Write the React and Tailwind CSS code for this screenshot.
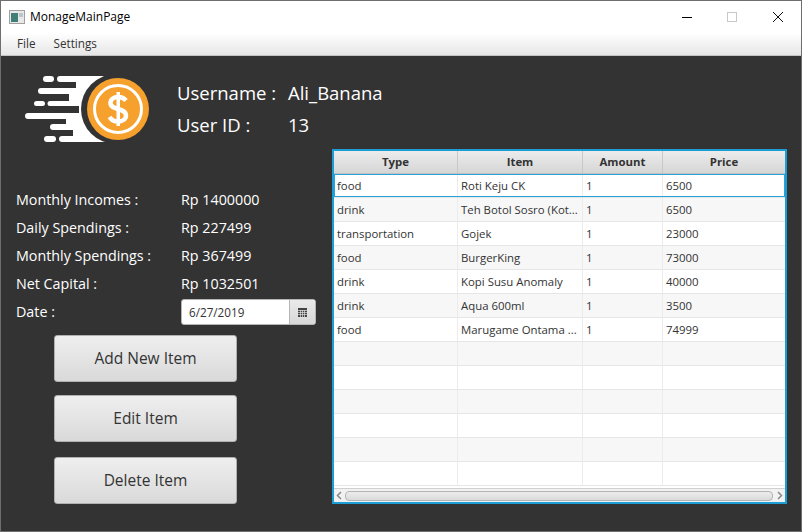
const rows = [
  ['food', 'Roti Keju CK', '1', '6500'],
  ['drink', 'Teh Botol Sosro (Kot...', '1', '6500'],
  ['transportation', 'Gojek', '1', '23000'],
  ['food', 'BurgerKing', '1', '73000'],
  ['drink', 'Kopi Susu Anomaly', '1', '40000'],
  ['drink', 'Aqua 600ml', '1', '3500'],
  ['food', 'Marugame Ontama ...', '1', '74999'],
  ['', '', '', ''],
  ['', '', '', ''],
  ['', '', '', ''],
  ['', '', '', ''],
  ['', '', '', ''],
  ['', '', '', ''],
]

const stats = [
  ['Monthly Incomes :', 'Rp 1400000'],
  ['Daily Spendings :', 'Rp 227499'],
  ['Monthly Spendings :', 'Rp 367499'],
  ['Net Capital :', 'Rp 1032501'],
]

const columns = ['w-[124px]', 'w-[125px]', 'w-[80px]', 'flex-1']
const headers = ['Type', 'Item', 'Amount', 'Price']

function Logo() {
  return (
    <svg width="126" height="68" viewBox="0 0 126 68" className="block shrink-0">
      <g fill="#fff">
        <rect x="18" y="0" width="11" height="6" rx="3" />
        <path d="M35 0H85V66H37a3 3 0 0 1 0-6H48V54H28a3 3 0 0 1 0-6H41V43H3a3 3 0 0 1 0-6H54V30H25a2.5 2.5 0 0 1 0-5H44V18H16a3 3 0 0 1 0-6H51V6H35a3 3 0 0 1 0-6Z" />
        <rect x="9" y="25" width="11" height="5" rx="2.5" />
        <rect x="19" y="60" width="12" height="6" rx="3" />
      </g>
      <circle cx="91" cy="33" r="35" fill="#333333" />
      <circle cx="93" cy="33" r="31" fill="#f6a02d" />
      <circle cx="93" cy="33" r="23.5" fill="none" stroke="#fff" strokeWidth="3" />
      <path d="M101 24.5c-2-2.5-5-3.5-8-3.5-4 0-7.500 2-7.500 6 0 8 15.500 4 15.500 12.500 0 4-4 6-8 6-3.500 0-6.500-1.500-8.500-4.500" fill="none" stroke="#fff" strokeWidth="4.5" />
      <rect x="91.500" y="16" width="3.500" height="34" fill="#fff" />
    </svg>
  )
}

function GrayButton({ label, className }) {
  return (
    <button className={`h-[47px] w-[183px] rounded-[3px] border border-[#b0b0b0] bg-gradient-to-b from-[#efefef] to-[#d9d9d9] text-[15.5px] text-[#333] ${className}`}>
      {label}
    </button>
  )
}

export default function App() {
  return (
    <div className="flex h-[532px] w-[802px] flex-col overflow-hidden border border-[#6e6e6e] bg-[#333333] font-['Open_Sans','Noto_Sans',sans-serif]">
      {/* title bar */}
      <div className="flex h-[32px] shrink-0 items-center bg-white pl-2">
        <svg width="16" height="14" viewBox="0 0 16 14">
          <rect x="0.5" y="0.5" width="15" height="13" fill="#e8e8e8" stroke="#a0a0a0" />
          <rect x="2" y="3" width="7" height="9" fill="#3f7f78" />
          <rect x="10" y="3" width="4" height="4" fill="#b9c4cc" />
        </svg>
        <span className="ml-[5px] text-[12px] text-black">MonageMainPage</span>
        <div className="ml-auto flex items-center">
          <div className="h-px w-[10px] bg-black" />
          <div className="ml-[35px] h-[10px] w-[10px] border border-[#c8c8c8]" />
          <svg width="12" height="12" viewBox="0 0 12 12" className="ml-[35px] mr-[17px]">
            <path d="M1 1L11 11M11 1L1 11" stroke="#111" strokeWidth="1" fill="none" />
          </svg>
        </div>
      </div>
      {/* menu */}
      <div className="flex h-[23px] shrink-0 items-center gap-[18px] border-b border-[#c4c4c4] bg-gradient-to-b from-white to-[#e6e6e6] pl-4 text-[11.7px] text-[#333]">
        <span>File</span>
        <span>Settings</span>
      </div>

      <div className="flex min-h-0 flex-1 pb-[27px]">
        {/* left side */}
        <div className="flex w-[331px] shrink-0 flex-col">
          <div className="flex pl-[24px] pt-5">
            <Logo />
            <div className="ml-[26px] mt-px h-[67px] text-[18.5px] leading-[32px] text-white">
              <div className="flex"><span className="w-[111px]">Username :</span><span>Ali_Banana</span></div>
              <div className="flex"><span className="w-[111px]">User ID :</span><span>13</span></div>
            </div>
          </div>
          <div className="mt-[42px] flex flex-col pl-[15px] text-[14.3px] leading-[28px] text-white">
            {stats.map(([k, v]) => (
              <div key={k} className="flex"><span className="w-[165px]">{k}</span><span>{v}</span></div>
            ))}
            <div className="flex items-center">
              <span className="w-[165px]">Date :</span>
              <div className="flex h-[26px] w-[135px] overflow-hidden rounded-[3px] border border-[#b5b5b5] bg-white">
                <span className="flex-1 pl-[7px] text-[11.7px] leading-[24px] text-[#333]">6/27/2019</span>
                <div className="flex w-[26px] items-center justify-center border-l border-[#b5b5b5] bg-gradient-to-b from-[#eaeaea] to-[#d8d8d8]">
                  <svg width="9" height="9" viewBox="0 0 9 9">
                    <rect width="9" height="9" fill="#444" />
                    <path d="M0 2.500H9M0 4.500H9M0 6.500H9M2.500 2V9M4.500 2V9M6.500 2V9" stroke="#e0e0e0" strokeWidth="0.7" />
                  </svg>
                </div>
              </div>
            </div>
          </div>
          <div className="mt-[9px] flex flex-col pl-[53px]">
            <GrayButton label="Add New Item" />
            <GrayButton label="Edit Item" className="mt-[13px]" />
            <GrayButton label="Delete Item" className="mt-[15px]" />
          </div>
        </div>

        {/* table */}
        <div className="mr-[14px] mt-[93px] flex min-w-0 flex-1 flex-col border-2 border-[#1c9dd4] bg-white text-[11.4px] text-[#333]">
          <div className="flex h-[23px] shrink-0 border-b border-[#c0c0c0] bg-gradient-to-b from-[#ececec] to-[#d6d6d6] font-bold">
            {headers.map((h, i) => (
              <div key={h} className={`${columns[i]} flex items-center justify-center border-r border-[#c8c8c8] last:border-r-0`}>{h}</div>
            ))}
          </div>
          <div className="min-h-0 flex-1 overflow-hidden">
            {rows.map((row, r) => (
              <div
                key={r}
                className={`relative flex h-[24px] border-b border-[#e6e6e6] ${r % 2 === 1 ? 'bg-[#f7f7f7]' : 'bg-white'}`}
              >
                {r === 0 && <div className="absolute inset-0 border border-[#2aa3d8]" />}
                {row.map((c, i) => (
                  <div key={i} className={`${columns[i]} flex items-center overflow-hidden whitespace-nowrap border-r border-[#ececec] pl-[3px] last:border-r-0`}>{c}</div>
                ))}
              </div>
            ))}
          </div>
          <div className="flex h-[14px] shrink-0 items-center border-t border-[#d0d0d0] bg-[#f2f2f2] px-[2px]">
            <span className="w-[9px]">
              <svg width="6" height="9" viewBox="0 0 6 9" className="block"><path d="M5 1L1.500 4.500L5 8" fill="none" stroke="#888" strokeWidth="1.500" /></svg>
            </span>
            <div className="h-[10px] flex-1 rounded-[4px] border border-[#b4b4b4] bg-gradient-to-b from-[#ededed] to-[#dadada]" />
            <span className="ml-[4px] w-[6px]">
              <svg width="6" height="9" viewBox="0 0 6 9" className="block"><path d="M1 1L4.500 4.500L1 8" fill="none" stroke="#888" strokeWidth="1.500" /></svg>
            </span>
          </div>
        </div>
      </div>
    </div>
  )
}
